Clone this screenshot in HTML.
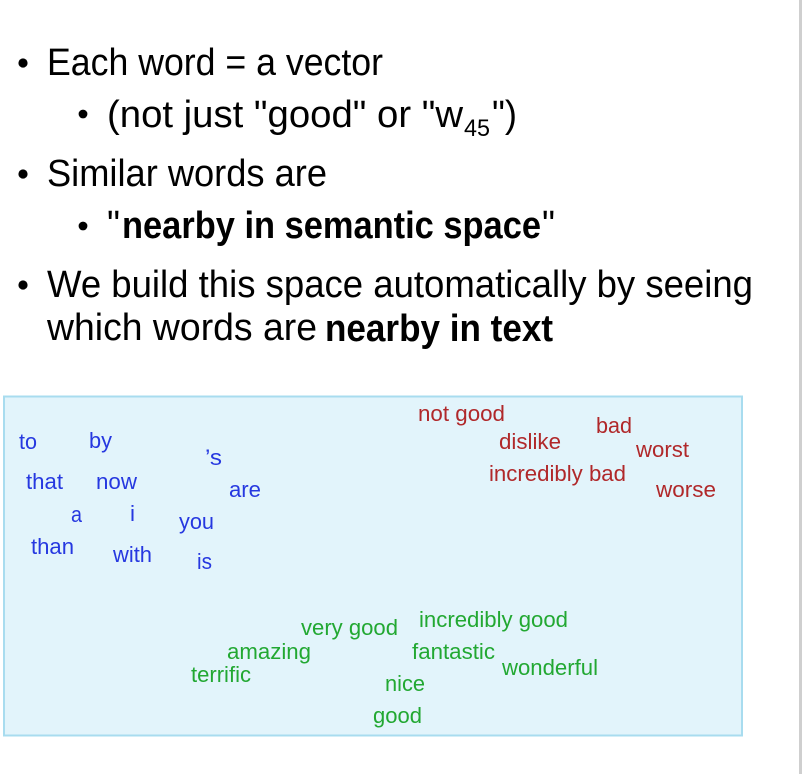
<!DOCTYPE html>
<html><head><meta charset="utf-8"><style>
html,body{margin:0;padding:0;background:#fff;width:802px;height:774px;overflow:hidden}
svg{display:block}
.m{font-family:"Liberation Sans",sans-serif;font-size:38px;fill:#000}
.b{font-weight:bold}
.w{font-family:"Liberation Sans",sans-serif;font-size:22.5px}
.bl{fill:#2638e0}.rd{fill:#b0282a}.gr{fill:#22a832}
</style></head><body>
<svg width="802" height="774" viewBox="0 0 802 774" xmlns="http://www.w3.org/2000/svg">
<rect x="799" y="0" width="3" height="774" fill="#cfcfcf"/>
<circle cx="23" cy="63" r="4.6"/>
<circle cx="83" cy="114" r="4.4"/>
<circle cx="23" cy="174" r="4.6"/>
<circle cx="83" cy="226" r="4.4"/>
<circle cx="23" cy="285" r="4.6"/>
<text class="m" x="47" y="75" textLength="336" lengthAdjust="spacingAndGlyphs">Each word = a vector</text>
<text class="m" x="107" y="127" textLength="356" lengthAdjust="spacingAndGlyphs">(not just "good" or "w</text>
<text class="m" x="464" y="136" style="font-size:24px" textLength="26" lengthAdjust="spacingAndGlyphs">45</text>
<text class="m" x="492" y="127" textLength="25" lengthAdjust="spacingAndGlyphs">")</text>
<text class="m" x="47" y="186" textLength="280" lengthAdjust="spacingAndGlyphs">Similar words are</text>
<text class="m" x="107" y="237" textLength="13" lengthAdjust="spacingAndGlyphs">"</text>
<text class="m b" x="122" y="238" textLength="419" lengthAdjust="spacingAndGlyphs">nearby in semantic space</text>
<text class="m" x="542" y="237" textLength="13" lengthAdjust="spacingAndGlyphs">"</text>
<text class="m" x="47" y="297" textLength="706" lengthAdjust="spacingAndGlyphs">We build this space automatically by seeing</text>
<text class="m" x="47" y="340" textLength="270" lengthAdjust="spacingAndGlyphs">which words are</text>
<text class="m b" x="325" y="341" textLength="228" lengthAdjust="spacingAndGlyphs">nearby in text</text>

<rect x="4" y="396.5" width="738" height="339" fill="#e2f4fb" stroke="#a8dcef" stroke-width="2"/>

<g class="w bl">
<text x="19" y="449" textLength="18" lengthAdjust="spacingAndGlyphs">to</text>
<text x="89" y="448" textLength="23" lengthAdjust="spacingAndGlyphs">by</text>
<text x="205" y="465" textLength="17" lengthAdjust="spacingAndGlyphs">’s</text>
<text x="26" y="489" textLength="37" lengthAdjust="spacingAndGlyphs">that</text>
<text x="96" y="489" textLength="41" lengthAdjust="spacingAndGlyphs">now</text>
<text x="229" y="497" textLength="32" lengthAdjust="spacingAndGlyphs">are</text>
<text x="71" y="522" textLength="11" lengthAdjust="spacingAndGlyphs">a</text>
<text x="130" y="521" textLength="5" lengthAdjust="spacingAndGlyphs">i</text>
<text x="179" y="529" textLength="35" lengthAdjust="spacingAndGlyphs">you</text>
<text x="31" y="554" textLength="43" lengthAdjust="spacingAndGlyphs">than</text>
<text x="113" y="562" textLength="39" lengthAdjust="spacingAndGlyphs">with</text>
<text x="197" y="569" textLength="15" lengthAdjust="spacingAndGlyphs">is</text>
</g>
<g class="w rd">
<text x="418" y="421" textLength="87" lengthAdjust="spacingAndGlyphs">not good</text>
<text x="596" y="433" textLength="36" lengthAdjust="spacingAndGlyphs">bad</text>
<text x="499" y="449" textLength="62" lengthAdjust="spacingAndGlyphs">dislike</text>
<text x="636" y="457" textLength="53" lengthAdjust="spacingAndGlyphs">worst</text>
<text x="489" y="481" textLength="137" lengthAdjust="spacingAndGlyphs">incredibly bad</text>
<text x="656" y="497" textLength="60" lengthAdjust="spacingAndGlyphs">worse</text>
</g>
<g class="w gr">
<text x="419" y="627" textLength="149" lengthAdjust="spacingAndGlyphs">incredibly good</text>
<text x="301" y="635" textLength="97" lengthAdjust="spacingAndGlyphs">very good</text>
<text x="227" y="659" textLength="84" lengthAdjust="spacingAndGlyphs">amazing</text>
<text x="412" y="659" textLength="83" lengthAdjust="spacingAndGlyphs">fantastic</text>
<text x="502" y="675" textLength="96" lengthAdjust="spacingAndGlyphs">wonderful</text>
<text x="191" y="682" textLength="60" lengthAdjust="spacingAndGlyphs">terrific</text>
<text x="385" y="691" textLength="40" lengthAdjust="spacingAndGlyphs">nice</text>
<text x="373" y="723" textLength="49" lengthAdjust="spacingAndGlyphs">good</text>
</g>
</svg>
</body></html>
